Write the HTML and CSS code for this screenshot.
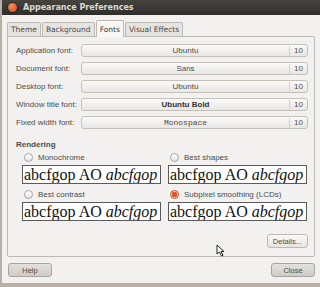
FILE: index.html
```html
<!DOCTYPE html>
<html lang="en">
  <head>
    <meta charset="UTF-8" />
    <title>Appearance Preferences</title>
    <link rel="stylesheet" href="styles.css">
  </head>
  <body>
    <div class="window">
      <div class="titlebar">
        <span class="close-dot"></span>
        <span class="title">Appearance Preferences</span>
      </div>
      <div class="content">
        <div class="tabs">
          <div class="tab">Theme</div>
          <div class="tab">Background</div>
          <div class="tab active">Fonts</div>
          <div class="tab">Visual Effects</div>
        </div>
        <div class="panel">
          <div class="font-rows">
            <div class="row">
              <span class="label">Application font:</span>
              <div class="font-btn"><span class="name">Ubuntu</span><span class="size">10</span></div>
            </div>
            <div class="row">
              <span class="label">Document font:</span>
              <div class="font-btn"><span class="name">Sans</span><span class="size">10</span></div>
            </div>
            <div class="row">
              <span class="label">Desktop font:</span>
              <div class="font-btn"><span class="name">Ubuntu</span><span class="size">10</span></div>
            </div>
            <div class="row">
              <span class="label">Window title font:</span>
              <div class="font-btn"><span class="name bold">Ubuntu Bold</span><span class="size">10</span></div>
            </div>
            <div class="row">
              <span class="label">Fixed width font:</span>
              <div class="font-btn"><span class="name mono">Monospace</span><span class="size">10</span></div>
            </div>
          </div>
          <div class="section-title">Rendering</div>
          <div class="render-grid">
            <div class="option">
              <div class="radio"><span class="dot"></span>Monochrome</div>
              <div class="sample">abcfgop AO <i>abcfgop</i></div>
            </div>
            <div class="option">
              <div class="radio"><span class="dot"></span>Best shapes</div>
              <div class="sample">abcfgop AO <i>abcfgop</i></div>
            </div>
            <div class="option">
              <div class="radio"><span class="dot"></span>Best contrast</div>
              <div class="sample">abcfgop AO <i>abcfgop</i></div>
            </div>
            <div class="option">
              <div class="radio"><span class="dot checked"></span>Subpixel smoothing (LCDs)</div>
              <div class="sample">abcfgop AO <i>abcfgop</i></div>
            </div>
          </div>
          <div class="details-row">
            <button class="btn">Details...</button>
          </div>
        </div>
        <div class="footer">
          <button class="btn wide">Help</button>
          <button class="btn wide">Close</button>
        </div>
      </div>
    </div>
    <svg class="cursor" width="9" height="13" viewBox="0 0 9 13">
      <path d="M1 1 L1 10 L3.5 8 L5.5 12 L7 11.3 L5 7.5 L8 7.5 Z" fill="#fff" stroke="#222" stroke-width="1"/>
    </svg>
  </body>
</html>
```

FILE: styles.css
```css
body {
  margin: 0;
  width: 320px;
  height: 287px;
  overflow: hidden;
  background: #b9b1a6;
  font-family: "Liberation Sans", sans-serif;
  position: relative;
}
.window {
  margin-left: 2px;
  width: 318px;
  height: 283px;
  background-color: #f2f1f0;
  display: flex;
  flex-direction: column;
}
.titlebar {
  height: 15px;
  background: linear-gradient(#45443f, #2f2e2a);
  display: flex;
  align-items: center;
  padding-left: 6px;
  gap: 6px;
}
.close-dot {
  width: 9px;
  height: 9px;
  border-radius: 50%;
  background: radial-gradient(circle at 40% 35%, #f58a5a, #d8461c);
  box-shadow: 0 0 0 1px #2a2925;
}
.title {
  color: #dfdbd2;
  font-family: "DejaVu Sans", sans-serif;
  font-size: 8px;
  font-weight: bold;
}
.content {
  flex: 1;
  padding: 5px 5px 0 5px;
  display: flex;
  flex-direction: column;
}
.tabs {
  display: flex;
  align-items: flex-end;
  height: 16px;
  position: relative;
  z-index: 1;
}
.tab {
  height: 14px;
  padding: 0 3px;
  font-family: "DejaVu Sans", sans-serif;
  font-size: 7.5px;
  color: #4c4c4c;
  background: #e6e4e0;
  border: 1px solid #bdbab4;
  border-bottom: none;
  margin-right: 1px;
  display: flex;
  align-items: center;
  box-sizing: border-box;
  border-radius: 2px 2px 0 0;
}
.tab.active {
  height: 17px;
  background: #f8f7f6;
  color: #3c3c3c;
  margin-bottom: -1px;
}
.panel {
  border: 1px solid #bdbab4;
  background: #f2f1f0;
  height: 221px;
  box-sizing: border-box;
  padding: 7px 6px 0 8px;
  display: flex;
  flex-direction: column;
  border-radius: 0 2px 2px 2px;
}
.font-rows {
  display: flex;
  flex-direction: column;
  gap: 5px;
}
.row {
  display: flex;
  align-items: center;
  height: 13px;
}
.label {
  width: 65px;
  font-size: 8px;
  color: #4c4c4c;
  white-space: nowrap;
}
.font-btn {
  flex: 1;
  height: 13px;
  box-sizing: border-box;
  border: 1px solid #c4c1bb;
  border-radius: 3px;
  background: linear-gradient(#fbfaf9, #e9e7e4);
  display: flex;
  align-items: center;
  font-size: 8px;
  line-height: 11px;
  color: #4c4c4c;
}
.name {
  flex: 1;
  text-align: center;
}
.name.bold {
  font-weight: bold;
  color: #333;
}
.name.mono {
  font-family: "Liberation Mono", monospace;
}
.size {
  width: 17px;
  text-align: center;
  border-left: 1px solid #d3d0cb;
  line-height: 10px;
}
.section-title {
  font-size: 8px;
  font-weight: bold;
  color: #4c4c4c;
  margin-top: 11px;
}
.render-grid {
  display: grid;
  grid-template-columns: 139px 139px;
  column-gap: 7px;
  row-gap: 5px;
  margin-left: 6px;
  margin-top: 3px;
}
.radio {
  display: flex;
  align-items: center;
  gap: 5px;
  font-size: 8px;
  color: #4c4c4c;
  height: 10px;
  margin-left: 2px;
}
.dot {
  width: 7px;
  height: 7px;
  border: 1px solid #a9a6a0;
  border-radius: 50%;
  background: linear-gradient(#ffffff, #e8e6e3);
}
.dot.checked {
  border-color: #c4552a;
  background: radial-gradient(circle, #e0552a 0 2.5px, #f7c5ae 3px);
}
.sample {
  margin-top: 3px;
  height: 19px;
  border: 1px solid #5b5b5b;
  background: #fff;
  box-sizing: border-box;
  font-family: "Liberation Serif", serif;
  font-size: 16px;
  line-height: 17px;
  color: #111;
  padding-left: 1px;
  white-space: nowrap;
  overflow: hidden;
}
.details-row {
  display: flex;
  justify-content: flex-end;
  margin-top: 13px;
}
.btn {
  height: 14px;
  padding: 0 5px;
  font-family: "Liberation Sans", sans-serif;
  font-size: 7.5px;
  color: #4c4c4c;
  border: 1px solid #bdbab4;
  border-radius: 3px;
  background: linear-gradient(#fbfaf9, #e7e5e2);
}
.btn.wide {
  width: 44px;
  background: linear-gradient(#e3e1de, #cfccc8);
  border-color: #a7a49f;
}
.footer {
  display: flex;
  justify-content: space-between;
  margin-top: 6px;
  padding-left: 1px;
}
.cursor {
  position: absolute;
  left: 216px;
  top: 244px;
}
```
